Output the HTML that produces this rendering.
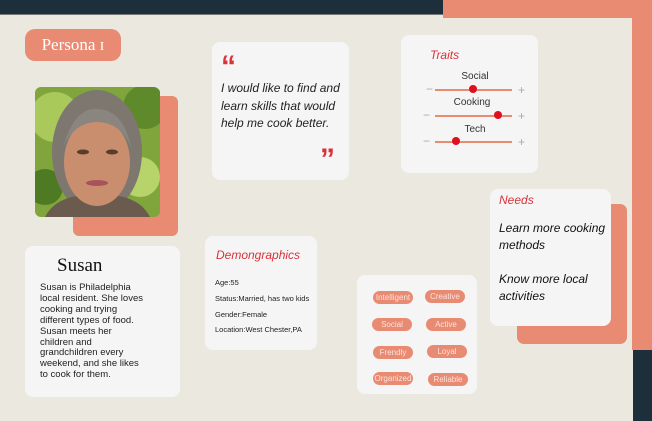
<!DOCTYPE html>
<html><head><meta charset="utf-8"><style>
*{margin:0;padding:0;box-sizing:border-box}
body{width:652px;height:421px;background:#ebe8e0;position:relative;overflow:hidden;font-family:"Liberation Sans",sans-serif}
.a{position:absolute}
.card{position:absolute;background:#f5f5f5;border-radius:8px}
.sal{background:#e98a73}
.red{color:#d8333a;font-style:italic}
.tag{position:absolute;background:#e98a73;color:#fbe4dc;border-radius:7px;font-size:8px;text-align:center;line-height:13px;width:40px;height:13px;font-family:"Liberation Sans Narrow","Liberation Sans",sans-serif}
.lab{position:absolute;font-size:10px;color:#333;width:80px;text-align:center}
.trk{position:absolute;height:2px;background:#e98a73;width:77px;left:435px}
.dot{position:absolute;width:8px;height:8px;border-radius:50%;background:#e0101e}
.pm{position:absolute;color:#aaa;font-size:12px;line-height:12px}
</style></head><body>
<div class="a" style="left:0;top:0;width:443px;height:15px;background:#1e2f3c;border-bottom:1px solid #777"></div>
<div class="a sal" style="left:443px;top:0;width:209px;height:18px"></div>
<div class="a sal" style="left:632px;top:18px;width:20px;height:332px"></div>
<div class="a" style="left:633px;top:350px;width:19px;height:71px;background:#1e2f3c"></div>

<div class="a sal" style="left:25px;top:29px;width:96px;height:32px;border-radius:10px;color:#fff;font-family:'Liberation Serif',serif;font-size:17px;text-align:center;line-height:32px">Persona ɪ</div>

<div class="a sal" style="left:73px;top:96px;width:105px;height:140px;border-radius:6px"></div>
<svg class="a" style="left:35px;top:87px;border-radius:6px" width="125" height="130" viewBox="0 0 125 130">
<rect width="125" height="130" fill="#7fa53c"/>
<circle cx="20" cy="30" r="25" fill="#a9c95a"/><circle cx="110" cy="20" r="22" fill="#5f8a2c"/><circle cx="105" cy="90" r="20" fill="#b6d46a"/><circle cx="10" cy="100" r="18" fill="#4f7a24"/>
<ellipse cx="62" cy="65" rx="45" ry="62" fill="#7d7770"/>
<path d="M10 130 Q20 110 50 108 L75 108 Q105 110 115 130Z" fill="#6b5b4e"/>
<ellipse cx="62" cy="75" rx="33" ry="44" fill="#c98e6e"/>
<path d="M28 60 Q40 20 62 22 Q88 22 96 60 Q85 35 62 35 Q40 35 28 60Z" fill="#8a857e"/>
<ellipse cx="48" cy="65" rx="6" ry="2.5" fill="#5a3c2a"/><ellipse cx="77" cy="65" rx="6" ry="2.5" fill="#5a3c2a"/>
<ellipse cx="62" cy="96" rx="11" ry="3" fill="#a8525a"/>
</svg>

<div class="card" style="left:212px;top:42px;width:137px;height:138px">
<div class="a" style="left:9px;top:10px;color:#d8333a;font-size:30px;line-height:30px;font-weight:bold;font-family:'Liberation Sans',sans-serif">“</div>
<div class="a" style="left:9px;top:38px;font-size:12px;font-style:italic;line-height:17.5px;color:#222;width:128px">I would like to find and learn skills that would help me cook better.</div>
<div class="a" style="left:108px;top:103px;color:#d8333a;font-size:30px;line-height:30px;font-weight:bold;font-family:'Liberation Sans',sans-serif">”</div>
</div>

<div class="card" style="left:401px;top:35px;width:137px;height:138px">
<div class="a red" style="left:29px;top:13px;font-size:12px">Traits</div>
</div>
<div class="lab" style="left:435px;top:71px">Social</div>
<div class="lab" style="left:432px;top:97px">Cooking</div>
<div class="lab" style="left:435px;top:124px">Tech</div>
<div class="trk" style="top:89px"></div><div class="trk" style="top:115px"></div><div class="trk" style="top:141px"></div>
<div class="dot" style="left:469px;top:85px"></div><div class="dot" style="left:494px;top:111px"></div><div class="dot" style="left:452px;top:137px"></div>
<div class="pm" style="left:426px;top:83px">−</div><div class="pm" style="left:423px;top:109px">−</div><div class="pm" style="left:423px;top:135px">−</div>
<div class="pm" style="left:518px;top:84px">+</div><div class="pm" style="left:518px;top:110px">+</div><div class="pm" style="left:518px;top:136px">+</div>

<div class="a sal" style="left:517px;top:204px;width:110px;height:140px;border-radius:7px"></div>
<div class="card" style="left:490px;top:189px;width:121px;height:137px">
<div class="a red" style="left:9px;top:4px;font-size:12px">Needs</div>
<div class="a" style="left:9px;top:31px;font-size:12px;font-style:italic;line-height:17px;color:#111;width:112px">Learn more cooking methods<br><br>Know more local activities</div>
</div>

<div class="card" style="left:25px;top:246px;width:155px;height:151px">
<div class="a" style="left:32px;top:9px;font-family:'Liberation Serif',serif;font-size:19px;color:#111">Susan</div>
<div class="a" style="left:15px;top:37px;font-size:9.5px;line-height:10.9px;color:#222;white-space:nowrap">Susan is Philadelphia<br>local resident. She loves<br>cooking and trying<br>different types of food.<br>Susan meets her<br>children and<br>grandchildren every<br>weekend, and she likes<br>to cook for them.</div>
</div>

<div class="card" style="left:205px;top:236px;width:112px;height:114px">
<div class="a red" style="left:11px;top:12px;font-size:12px">Demongraphics</div>
<div class="a" style="left:10px;top:39px;font-size:7.5px;line-height:15.8px;color:#222;width:110px;white-space:nowrap">Age:55<br>Status:Married, has two kids<br>Gender:Female<br>Location:West Chester,PA</div>
</div>

<div class="card" style="left:357px;top:275px;width:120px;height:119px"></div>
<div class="tag" style="left:373px;top:291px">Intelligent</div>
<div class="tag" style="left:425px;top:290px">Creative</div>
<div class="tag" style="left:372px;top:318px">Social</div>
<div class="tag" style="left:426px;top:318px">Active</div>
<div class="tag" style="left:373px;top:346px">Frendly</div>
<div class="tag" style="left:427px;top:345px">Loyal</div>
<div class="tag" style="left:373px;top:372px">Organized</div>
<div class="tag" style="left:428px;top:373px">Reliable</div>
</body></html>
